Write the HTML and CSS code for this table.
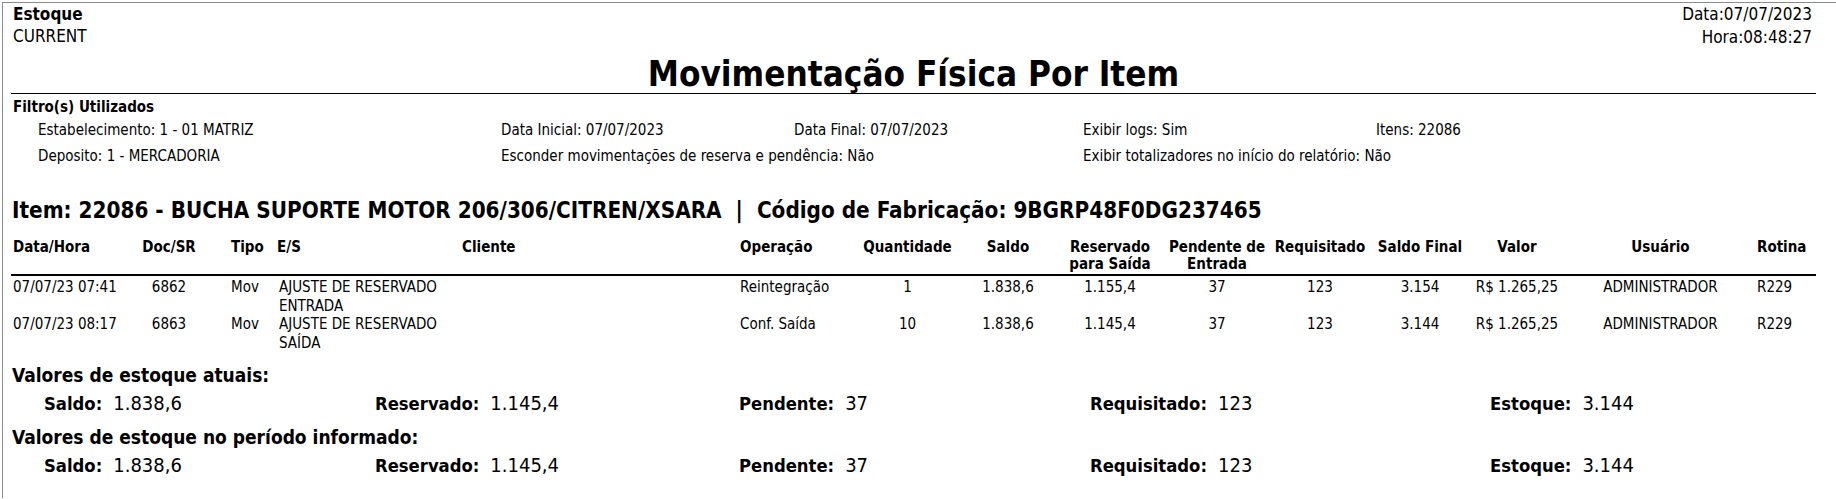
FILE: index.html
```html
<!DOCTYPE html>
<html lang="pt-BR">
<head>
<meta charset="utf-8">
<title>Movimentação Física Por Item</title>
<link rel="stylesheet" href="styles.css">
</head>
<body>
<div class="page">
  <header class="top">
    <div class="top-left">
      <div class="sys">Estoque</div>
      <div class="env">CURRENT</div>
    </div>
    <div class="top-right">
      <div>Data:07/07/2023</div>
      <div>Hora:08:48:27</div>
    </div>
  </header>

  <h1 class="title">Movimentação Física Por Item</h1>

  <section class="filters">
    <div class="filters-title">Filtro(s) Utilizados</div>
    <div class="filters-grid">
      <span>Estabelecimento: 1 - 01 MATRIZ</span>
      <span>Data Inicial: 07/07/2023</span>
      <span>Data Final: 07/07/2023</span>
      <span>Exibir logs: Sim</span>
      <span>Itens: 22086</span>
      <span>Deposito: 1 - MERCADORIA</span>
      <span class="span2">Esconder movimentações de reserva e pendência: Não</span>
      <span class="span2">Exibir totalizadores no início do relatório: Não</span>
    </div>
  </section>

  <h2 class="item">Item: 22086 - BUCHA SUPORTE MOTOR 206/306/CITREN/XSARA &nbsp;| &nbsp;Código de Fabricação: 9BGRP48F0DG237465</h2>

  <div class="mov-table">
    <div class="row head">
      <div class="c c1">Data/Hora</div>
      <div class="c c2">Doc/SR</div>
      <div class="c c3">Tipo</div>
      <div class="c c4 h4">E/S</div>
      <div class="c c5 h5">Cliente</div>
      <div class="c c6">Operação</div>
      <div class="c c7">Quantidade</div>
      <div class="c c8">Saldo</div>
      <div class="c c9">Reservado<br>para Saída</div>
      <div class="c c10">Pendente de<br>Entrada</div>
      <div class="c c11">Requisitado</div>
      <div class="c c12">Saldo Final</div>
      <div class="c c13">Valor</div>
      <div class="c c14">Usuário</div>
      <div class="c c15">Rotina</div>
    </div>
    <div class="row data">
      <div class="c c1">07/07/23 07:41</div>
      <div class="c c2">6862</div>
      <div class="c c3">Mov</div>
      <div class="c c4">AJUSTE DE RESERVADO<br>ENTRADA</div>
      <div class="c c5"></div>
      <div class="c c6">Reintegração</div>
      <div class="c c7">1</div>
      <div class="c c8">1.838,6</div>
      <div class="c c9">1.155,4</div>
      <div class="c c10">37</div>
      <div class="c c11">123</div>
      <div class="c c12">3.154</div>
      <div class="c c13">R$ 1.265,25</div>
      <div class="c c14">ADMINISTRADOR</div>
      <div class="c c15">R229</div>
    </div>
    <div class="row data">
      <div class="c c1">07/07/23 08:17</div>
      <div class="c c2">6863</div>
      <div class="c c3">Mov</div>
      <div class="c c4">AJUSTE DE RESERVADO<br>SAÍDA</div>
      <div class="c c5"></div>
      <div class="c c6">Conf. Saída</div>
      <div class="c c7">10</div>
      <div class="c c8">1.838,6</div>
      <div class="c c9">1.145,4</div>
      <div class="c c10">37</div>
      <div class="c c11">123</div>
      <div class="c c12">3.144</div>
      <div class="c c13">R$ 1.265,25</div>
      <div class="c c14">ADMINISTRADOR</div>
      <div class="c c15">R229</div>
    </div>
  </div>

  <section class="totals">
    <div class="totals-title first">Valores de estoque atuais:</div>
    <div class="totals-row">
      <div class="tot"><span class="lbl">Saldo:</span><span class="val">1.838,6</span></div>
      <div class="tot"><span class="lbl">Reservado:</span><span class="val">1.145,4</span></div>
      <div class="tot"><span class="lbl">Pendente:</span><span class="val">37</span></div>
      <div class="tot"><span class="lbl">Requisitado:</span><span class="val">123</span></div>
      <div class="tot"><span class="lbl">Estoque:</span><span class="val">3.144</span></div>
    </div>
    <div class="totals-title">Valores de estoque no período informado:</div>
    <div class="totals-row">
      <div class="tot"><span class="lbl">Saldo:</span><span class="val">1.838,6</span></div>
      <div class="tot"><span class="lbl">Reservado:</span><span class="val">1.145,4</span></div>
      <div class="tot"><span class="lbl">Pendente:</span><span class="val">37</span></div>
      <div class="tot"><span class="lbl">Requisitado:</span><span class="val">123</span></div>
      <div class="tot"><span class="lbl">Estoque:</span><span class="val">3.144</span></div>
    </div>
  </section>
</div>
</body>
</html>
```

FILE: styles.css
```css
html, body {
  margin: 0;
  padding: 0;
  background: #ffffff;
}

body {
  font-family: "DejaVu Sans Condensed", "DejaVu Sans", sans-serif;
  font-stretch: condensed;
  color: #000;
  font-size: 15px;
}

.page {
  margin: 2px 0 0 2px;
  border-top: 1px solid #8c8c8c;
  border-left: 1px solid #8c8c8c;
  padding: 0 20px 0 8px;
  height: 496px;
  box-sizing: border-box;
}

/* header */
.top {
  display: flex;
  justify-content: space-between;
  align-items: flex-start;
  height: 46px;
}

.top-left {
  font-size: 17px;
  line-height: 22px;
  padding-left: 2px;
}

.sys {
  font-weight: bold;
}

.top-right {
  font-size: 17px;
  line-height: 23px;
  text-align: right;
  padding-right: 4px;
}

.title {
  margin: 6px 0 0 0;
  font-size: 34.8px;
  line-height: 38px;
  font-weight: bold;
  text-align: center;
  border-bottom: 1px solid #000;
}

/* filters */
.filters {
  margin-top: 4px;
}

.filters-title {
  font-weight: bold;
  font-size: 15px;
  line-height: 18px;
  padding-left: 2px;
}

.filters-grid {
  margin-top: 5px;
  display: grid;
  grid-template-columns: 463px 293px 289px 293px auto;
  row-gap: 8px;
  padding-left: 27px;
  line-height: 18px;
  font-size: 15px;
  white-space: nowrap;
}

.filters-grid .span2 {
  grid-column: span 2;
}

/* item */
.item {
  margin: 31px 0 0 0;
  font-size: 22.3px;
  line-height: 28px;
  font-weight: bold;
  padding-left: 1px;
  white-space: nowrap;
}

/* movement table */
.mov-table {
  margin-top: 15px;
}

.row {
  display: grid;
  grid-template-columns: 131px 54px 81px 168px 295px 115px 105px 96px 108px 106px 100px 100px 94px 193px 59px;
}

.row.head {
  font-weight: bold;
  line-height: 17px;
  border-bottom: 2px solid #000;
  padding-bottom: 1px;
}

.row.data {
  line-height: 18.5px;
}

.row.head + .row.data {
  padding-top: 2px;
}

.c {
  white-space: nowrap;
}

.c1 { padding-left: 2px; }
.c2 { text-align: center; }
.c3 { padding-left: 35px; }
.c4 { padding-left: 2px; }
.c4.h4 { padding-left: 0; }
.c5.h5 { padding-left: 17px; }
.c6 { text-align: left; }
.c7, .c8, .c9, .c10, .c11, .c12, .c13, .c14 { text-align: center; }
.c15 { text-align: left; }

/* totals */
.totals {
  margin-top: 11px;
}

.totals-title {
  font-weight: bold;
  font-size: 19px;
  line-height: 24px;
  padding-left: 1px;
  margin-top: 8px;
}

.totals-title.first {
  margin-top: 0;
}

.totals-row {
  display: grid;
  grid-template-columns: 331px 364px 351px 400px auto;
  padding-left: 33px;
  margin-top: 3px;
  line-height: 26px;
}

.tot {
  display: flex;
  align-items: baseline;
  gap: 11px;
  white-space: nowrap;
}

.lbl {
  font-weight: bold;
  font-size: 18.3px;
}

.val {
  font-size: 20px;
}
```
